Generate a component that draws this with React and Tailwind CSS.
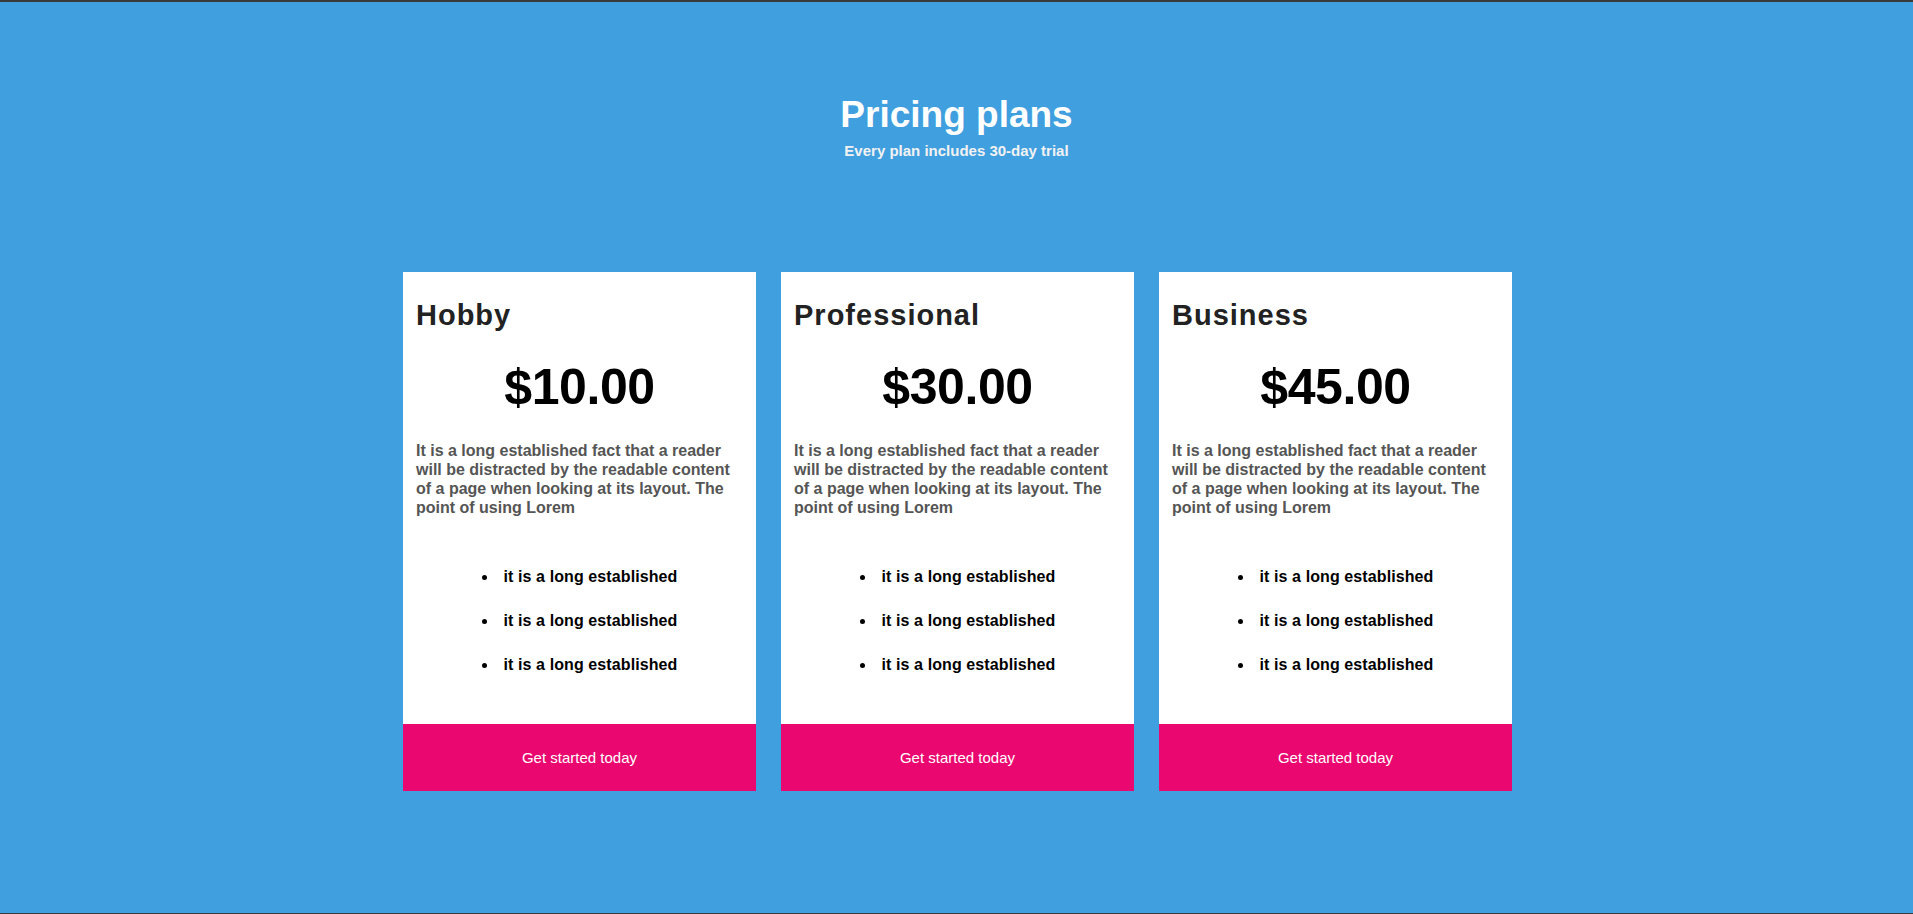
const plans = [
  { name: 'Hobby', price: '$10.00' },
  { name: 'Professional', price: '$30.00' },
  { name: 'Business', price: '$45.00' },
]

const blurb =
  'It is a long established fact that a reader will be distracted by the readable content of a page when looking at its layout. The point of using Lorem'

function PlanCard({ plan }) {
  return (
    <div className="w-[353px] bg-white flex flex-col">
      <div className="px-[13px] pt-[27px]">
        <h2 className="text-[29px] leading-[33px] font-bold tracking-[1px] text-[#222]">{plan.name}</h2>
        <div className="mt-[27px] text-center text-[50px] leading-[56px] font-bold tracking-[-0.4px] text-black">
          {plan.price}
        </div>
        <p className="mt-[26px] text-[16px] leading-[19px] font-bold text-[#555]">{blurb}</p>
        <ul className="mt-[50px] mb-[49px] flex flex-col items-center gap-[24px]">
          {[1, 2, 3].map((i) => (
            <li key={i} className="flex items-center text-[16px] leading-[20px] font-bold tracking-[0.1px] text-black">
              <span className="w-[5px] h-[5px] rounded-full bg-black mr-[17px] mt-[1px]"></span>
              it is a long established
            </li>
          ))}
        </ul>
      </div>
      <button className="h-[67px] bg-[#ea0770] text-white text-[15px] leading-[17px]">Get started today</button>
    </div>
  )
}

function App() {
  return (
    <div
      className="h-screen bg-[#409fdf] border-t-2 border-b border-[#3a3a3a] flex flex-col items-center"
      style={{ fontFamily: '"Liberation Sans", Arial, sans-serif' }}
    >
      <h1 className="mt-[92px] text-[37px] leading-[42px] font-bold text-white">Pricing plans</h1>
      <p className="mt-[6px] text-[15px] leading-[17px] font-bold text-[#f2f2f2]">Every plan includes 30-day trial</p>
      <div className="mt-[113px] pl-[2px] flex justify-center gap-[25px]">
        {plans.map((p) => (
          <PlanCard key={p.name} plan={p} />
        ))}
      </div>
    </div>
  )
}

export default App
